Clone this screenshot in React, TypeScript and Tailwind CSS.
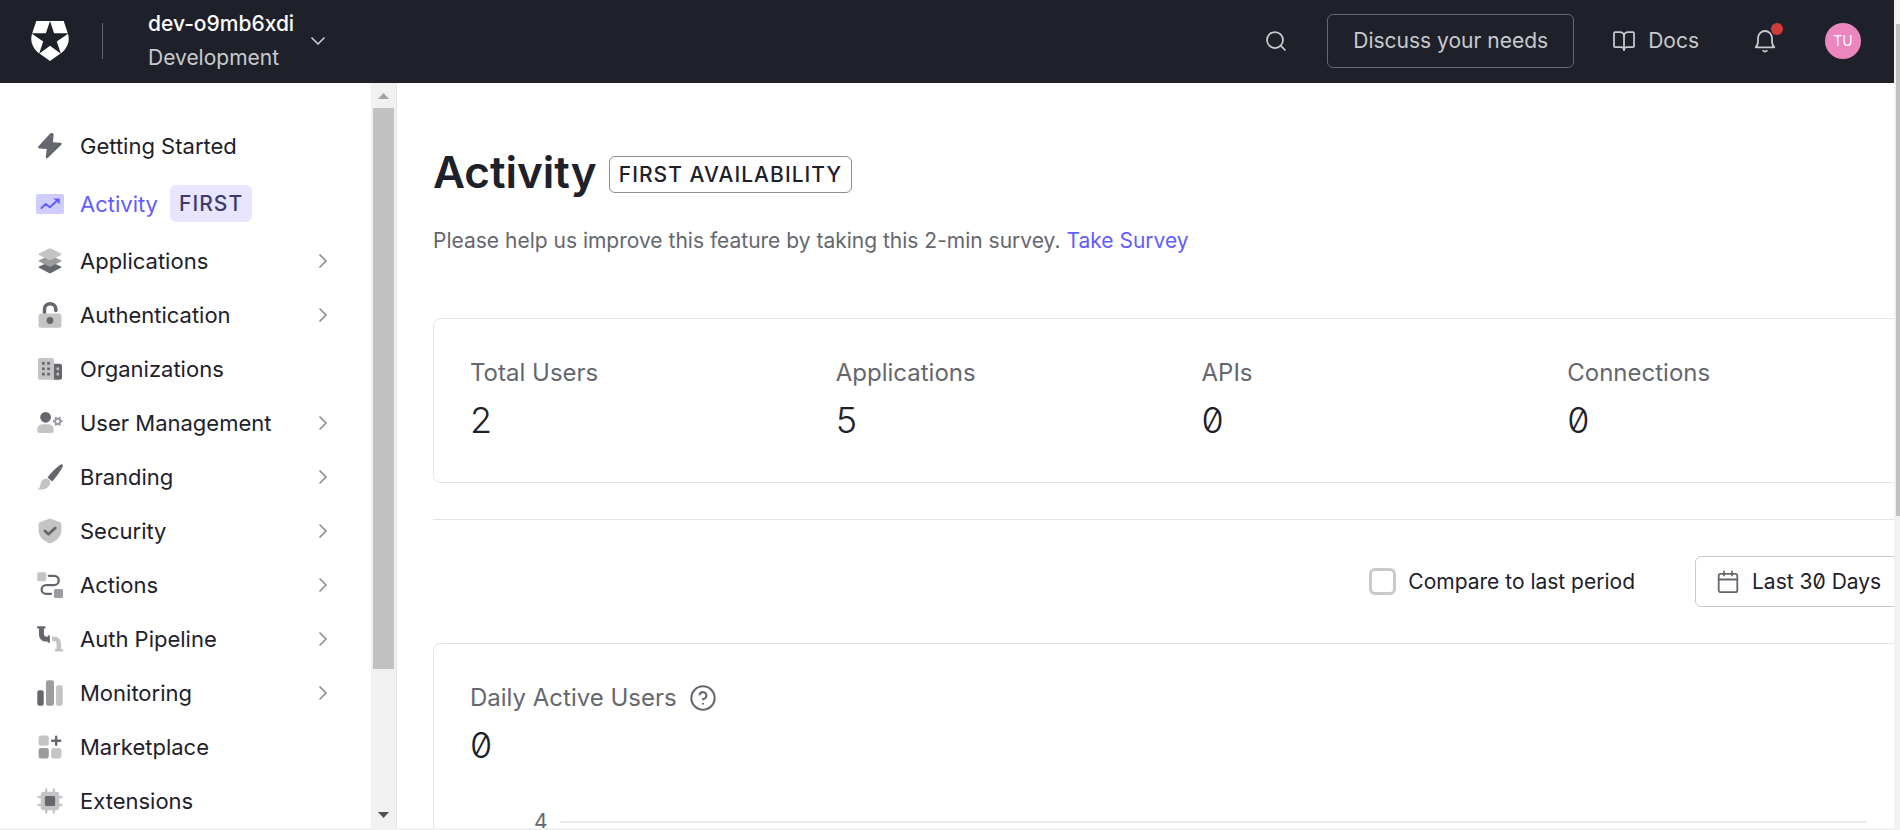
import type { ReactNode } from "react";
import { BookOpen, ChevronDown, ChevronRight, CircleHelp, Search } from "lucide-react";

const DARK = "#65676e";
const MID = "#9b9c9f";
const LIGHT = "#c4c4c5";

function NavIcon({ children }: { children: ReactNode }) {
  return (
    <svg viewBox="0 0 28 28" className="size-7 shrink-0" fill="none" aria-hidden="true">
      {children}
    </svg>
  );
}

const icons: Record<string, ReactNode> = {
  start: (
    <path
      d="M13.300 2.400 2.500 14.300c-.9 1-.5 2 .8 2.100l7.400.5-.9 8c-.1 1.400 1.300 1.800 2.200.8L25.300 12.800c.9-1 .5-2-.8-2.100l-7.500-.4.6-7.600c.1-1.500-2.300-2.500-4.300-.3Z"
      fill={DARK}
    />
  ),
  activity: (
    <>
      <rect x="0" y="4" width="28" height="20" rx="2" fill="#cfcdff" />
      <path d="m5.500 18 4.300-4 4 3.300 7.200-6.500" stroke="#635dff" strokeWidth="2" strokeLinecap="round" strokeLinejoin="round" />
      <path d="M17.500 8.500h6.200v6z" fill="#635dff" />
    </>
  ),
  applications: (
    <>
      <path d="M14 14.500 25 19.400c.6.300.6 1.100 0 1.400l-10 5.200c-.6.300-1.400.300-2 0L3 20.800c-.6-.3-.6-1.100 0-1.400Z" fill={DARK} />
      <path d="M14 8 25 13.200c.6.300.6 1.100 0 1.400l-10 5c-.6.300-1.400.300-2 0l-10-5c-.6-.3-.6-1.100 0-1.400Z" fill={MID} />
      <path d="M13 1.600c.6-.3 1.400-.3 2 0l10 4.900c.6.300.6 1.100 0 1.400l-10 5.200c-.6.300-1.400.300-2 0L3 7.900c-.6-.3-.6-1.100 0-1.400Z" fill={LIGHT} />
    </>
  ),
  authentication: (
    <>
      <rect x="2.600" y="12.500" width="22.800" height="14.300" rx="2.500" fill={LIGHT} />
      <path d="M8.500 12.500V8.300c0-7.400 11.300-7.400 11.300 0v1.200" stroke={DARK} strokeWidth="3.500" />
      <circle cx="19.800" cy="9.500" r="1.750" fill={DARK} />
      <circle cx="14" cy="19.500" r="3.400" fill={DARK} />
    </>
  ),
  organizations: (
    <>
      <path d="M4 3h12a2 2 0 0 1 2 2v19.700H4a2 2 0 0 1-2-2V5a2 2 0 0 1 2-2Z" fill={LIGHT} />
      <path d="M18 8.700h6a2 2 0 0 1 2 2v12a2 2 0 0 1-2 2h-6Z" fill={DARK} />
      <path d="M6 7h2.700v2.700H6zM11.200 7h2.700v2.700h-2.700zM6 12.400h2.700v2.700H6zM11.200 12.400h2.700v2.700h-2.700zM6 17.800h2.700v2.700H6zM11.200 17.800h2.700v2.700h-2.700z" fill={DARK} />
      <path d="M20.600 12.400h2.400v2.700h-2.400zM20.600 17.800h2.400v2.700h-2.400z" fill={LIGHT} />
    </>
  ),
  users: (
    <>
      <circle cx="9.600" cy="8.300" r="5.400" fill={DARK} />
      <path d="M6.500 15.300h6c3 0 5.200 2.300 5.200 5.200v1.500a2 2 0 0 1-2 2H3.300a2 2 0 0 1-2-2v-1.500c0-2.900 2.200-5.200 5.200-5.200Z" fill={LIGHT} />
      <circle cx="21.700" cy="12.300" r="2.600" stroke={MID} strokeWidth="2" />
      <path d="M20.200 9.700 19.400 8M23.200 9.700l.8-1.700M20.200 14.900l-.8 1.700M23.200 14.900l.8 1.700M18.700 12.300h-2M24.700 12.300h2" stroke={MID} strokeWidth="2" />
    </>
  ),
  branding: (
    <>
      <path d="M26.400 1.500c.8.8.3 2.400-.2 3.300-2.500 4.600-6.200 9.800-10 13.600l-4.600-4C15.200 9.800 19.700 5.200 24 2.100c.9-.6 1.800-1.100 2.400-.6Z" fill={DARK} />
      <path d="M10 15.500c2.800.3 4.800 2.400 4.300 4.800-1.300 5.500-7.700 7.300-13 6 2-.6 2.600-2 3-4.300.6-3.600 2.400-6.200 5.700-6.500Z" fill={LIGHT} />
    </>
  ),
  security: (
    <>
      <path d="M13.200 1.800c.5-.2 1.100-.2 1.600 0l9.300 3.400c.8.3 1.300.9 1.300 1.700v6.600c0 5.800-4.800 10.400-10.600 12.700-.5.200-1.100.2-1.600 0C7.400 23.900 2.600 19.300 2.600 13.500V6.900c0-.8.5-1.400 1.300-1.700Z" fill={LIGHT} />
      <path d="m9 14 3.400 3.300 6.800-6.300" stroke={DARK} strokeWidth="2.800" strokeLinecap="round" strokeLinejoin="round" />
    </>
  ),
  actions: (
    <>
      <rect x="1.200" y="1.200" width="9" height="9" rx="1.500" fill={LIGHT} />
      <rect x="18" y="18" width="9" height="9" rx="1.500" fill={MID} />
      <path d="M12.800 4.800h5.300a4.600 4.600 0 0 1 0 9.300H10a4.300 4.300 0 0 0 0 8.700h5" stroke={DARK} strokeWidth="2.300" strokeLinecap="round" />
    </>
  ),
  pipeline: (
    <>
      <path d="M2 1.300h6.500a1 1 0 0 1 0 2.200H8v5.300c0 1.900 1 2.900 2.700 2.900h1v-.5c0-1.200 2.200-1.200 2.200 0V17c0 1.200-2.200 1.200-2.200 0v-.6H10c-4.200 0-7-2.700-7-7V3.500H2a1 1 0 0 1 0-2.200Z" fill={DARK} />
      <path d="M16 11.400h1.500c4.800 0 7.600 2.900 7.600 7.700v5h.9a1.200 1.200 0 0 1 0 2.500h-6a1.200 1.200 0 0 1 0-2.500h.5v-5c0-2-.9-3-3-3H16Z" fill={LIGHT} />
    </>
  ),
  monitoring: (
    <>
      <rect x="1.300" y="11.300" width="6.400" height="15.400" rx="2" fill={DARK} />
      <rect x="10" y="1.200" width="8" height="25.500" rx="2.200" fill={MID} />
      <rect x="20" y="6.200" width="6.700" height="20.500" rx="2" fill={LIGHT} />
    </>
  ),
  marketplace: (
    <>
      <rect x="2.600" y="2.500" width="10.200" height="10.200" rx="2.500" fill={LIGHT} />
      <rect x="2.600" y="15" width="10.200" height="10.500" rx="2.500" fill={MID} />
      <rect x="15.200" y="15" width="10.200" height="10.500" rx="2.500" fill={LIGHT} />
      <path d="M20.200 3.700v8M16.200 7.700h8" stroke={DARK} strokeWidth="2.400" strokeLinecap="round" />
    </>
  ),
  extensions: (
    <>
      <path d="M10.200 2.500v23M17.800 2.500v23M2.500 10.200h23M2.500 17.800h23" stroke={LIGHT} strokeWidth="2.300" strokeLinecap="round" />
      <rect x="4.700" y="4.700" width="18.600" height="18.600" rx="3" fill={LIGHT} />
      <rect x="8.900" y="8.900" width="10.200" height="10.200" rx="1.500" fill={DARK} />
    </>
  ),
};

const nav = [
  { icon: "start", label: "Getting Started" },
  { icon: "activity", label: "Activity", active: true },
  { icon: "applications", label: "Applications", nested: true },
  { icon: "authentication", label: "Authentication", nested: true },
  { icon: "organizations", label: "Organizations" },
  { icon: "users", label: "User Management", nested: true },
  { icon: "branding", label: "Branding", nested: true },
  { icon: "security", label: "Security", nested: true },
  { icon: "actions", label: "Actions", nested: true },
  { icon: "pipeline", label: "Auth Pipeline", nested: true },
  { icon: "monitoring", label: "Monitoring", nested: true },
  { icon: "marketplace", label: "Marketplace" },
  { icon: "extensions", label: "Extensions" },
];

const stats = [
  { label: "Total Users", value: 2 },
  { label: "Applications", value: 5 },
  { label: "APIs", value: 0 },
  { label: "Connections", value: 0 },
];

function Logo() {
  return (
    <svg viewBox="0 0 38 40" className="h-10 w-[38px]" aria-hidden="true">
      <path
        fill="#fff"
        d="M5.300 0H19l-4.100 12.300H1.200ZM19 0h13.700l4.100 12.300H23.100ZM1 12.700 12.200 20.400 8.200 32.400C2 27.500-1.300 20.500 1 12.700ZM37 12.700 25.800 20.400l4 12C36 27.500 39.300 20.500 37 12.700ZM19 24.800 29.500 32.400 19 40 8.500 32.400Z"
      />
    </svg>
  );
}

function Header() {
  return (
    <header className="flex h-[83px] shrink-0 items-center bg-[#1e212a] pr-[33px] pb-0.5 pl-[31px] text-[#c9cace]">
      <a href="#home" aria-label="Home">
        <Logo />
      </a>
      <span className="ml-[33px] h-9 w-px bg-[#65676e]" />
      <button type="button" className="ml-[45px] flex items-center gap-3 text-left text-[21px]">
        <span className="flex flex-col leading-[34px]">
          <span className="font-medium text-white">dev-o9mb6xdi</span>
          <span>Development</span>
        </span>
        <ChevronDown className="size-6" strokeWidth={1.75} />
      </button>
      <div className="ml-auto flex items-center">
        <button type="button" aria-label="Search">
          <Search className="size-6" strokeWidth={1.75} />
        </button>
        <button type="button" className="ml-[39px] h-[54px] rounded-md border border-[#65676e] px-[25px] text-[21px]">
          Discuss your needs
        </button>
        <a href="#docs" className="ml-[38px] flex items-center gap-3 text-[21px]">
          <BookOpen className="size-6" strokeWidth={1.75} />
          Docs
        </a>
        <button type="button" aria-label="Notifications" className="relative ml-[54px]">
          <svg viewBox="0 0 24 24" className="size-6" fill="none" stroke="currentColor" strokeWidth="1.800" strokeLinecap="round" strokeLinejoin="round">
            <path d="M2.700 18.300h18.600c-1.700-1.300-2.300-3.300-2.300-6V9A7 7 0 0 0 5 9v3.300c0 2.700-.6 4.700-2.300 6Z" />
            <path d="M10.200 21.700c.9 1.100 2.700 1.100 3.600 0" />
          </svg>
          <span className="absolute -top-1.5 -right-1.5 size-3 rounded-full bg-[#d03c38]" />
        </button>
        <button type="button" className="ml-12 size-9 rounded-full bg-[#eb86bf] text-sm text-white">
          TU
        </button>
      </div>
    </header>
  );
}

function Sidebar() {
  return (
    <aside className="flex w-[397px] shrink-0 border-r border-[#e3e4e6]">
      <nav className="flex-1 overflow-hidden px-9 pt-9 text-[22px] leading-[30px] text-[#1e212a]">
        {nav.map((item) => (
          <a key={item.label} href={`#${item.icon}`} className={item.active ? "flex items-center py-3 text-[#635dff]" : "flex items-center py-3"}>
            <NavIcon>{icons[item.icon]}</NavIcon>
            <span className="ml-4">{item.label}</span>
            {item.active && (
              <span className="ml-3 h-[37px] rounded-md bg-[#e8e6ff] px-[9px] text-[21px] leading-[37px] font-medium tracking-wider text-[#3f3a6e]">FIRST</span>
            )}
            {item.nested && <ChevronRight className="ml-auto size-6 text-[#8b8d93]" strokeWidth={1.75} />}
          </a>
        ))}
      </nav>
      <div className="flex w-[25px] flex-col items-center justify-between bg-[#f1f1f1]" aria-hidden="true">
        <div className="flex min-h-0 w-full flex-1 flex-col items-center">
          <svg viewBox="0 0 11 6" className="mt-2.5 mb-[9px] h-[6px] w-[11px] shrink-0">
            <path d="M5.500 0 11 6H0Z" fill="#a3a3a3" />
          </svg>
          <div className="h-[77%] w-[21px] bg-[#c1c1c1]" />
        </div>
        <svg viewBox="0 0 11 6" className="mb-2.5 h-[6px] w-[11px] shrink-0">
          <path d="M0 0h11L5.500 6Z" fill="#505050" />
        </svg>
      </div>
    </aside>
  );
}

function Content() {
  return (
    <main className="min-w-0 flex-1 overflow-hidden pt-[60px] pl-9 text-[#1e212a]">
      <div className="-mr-12 flex flex-col">
        <div className="flex items-end gap-3">
          <h1 className="text-[44px] leading-[58px] font-semibold">Activity</h1>
          <span className="mb-2 h-[37px] rounded-md border border-[#8b8d93] px-[9px] text-[21px] leading-[35px] font-medium tracking-wider">
            FIRST AVAILABILITY
          </span>
        </div>
        <p className="mt-[25px] text-[21px] leading-[30px] text-[#65676e]">
          Please help us improve this feature by taking this 2-min survey.{" "}
          <a href="#survey" className="text-[#635dff]">
            Take Survey
          </a>
        </p>

        <section className="mt-[62px] grid grid-cols-4 gap-7 rounded-lg border border-[#e3e4e6] px-9 py-9">
          {stats.map((s) => (
            <div key={s.label}>
              <h2 className="text-2xl leading-9 text-[#65676e]">{s.label}</h2>
              <p className="mt-1 text-4xl leading-[51px] font-light slashed-zero">{s.value}</p>
            </div>
          ))}
        </section>

        <hr className="mt-9 border-[#e3e4e6]" />

        <div className="mt-9 flex items-center justify-end text-[21px]">
          <label className="flex items-center gap-3">
            <input type="checkbox" className="size-[27px] appearance-none rounded-md border-3 border-[#c9cace]" />
            Compare to last period
          </label>
          <button type="button" className="ml-[60px] flex h-[51px] w-[247px] items-center gap-3 rounded-md border border-[#c9cace] pl-5 whitespace-nowrap slashed-zero">
            <svg viewBox="0 0 24 24" className="size-6 shrink-0 text-[#65676e]" fill="none" stroke="currentColor" strokeWidth="1.800" strokeLinecap="round" strokeLinejoin="round">
              <rect x="2.700" y="3.800" width="18.600" height="18.400" rx="2" />
              <path d="M2.700 9.500h18.600M8 1.500v4M16 1.500v4" />
            </svg>
            Last 30 Days
            <ChevronDown className="size-5 shrink-0" />
          </button>
        </div>

        <section className="mt-9 rounded-lg border border-[#e3e4e6] px-9 py-9">
          <h2 className="flex items-center gap-3 text-2xl leading-9 text-[#65676e]">
            Daily Active Users
            <CircleHelp className="size-7" strokeWidth={1.75} />
          </h2>
          <p className="mt-1 text-4xl leading-[51px] font-light slashed-zero">0</p>
          <div className="mt-9 mr-[38px] flex items-center gap-3 pl-16 text-[21px] leading-[30px] text-[#65676e]">
            <span>4</span>
            <span className="h-0.5 flex-1 bg-[#ebebeb]" />
          </div>
          <div className="h-80" />
        </section>
      </div>
    </main>
  );
}

export default function App() {
  return (
    <div className="flex h-screen overflow-hidden bg-white font-['Inter',sans-serif]">
      <div className="flex min-w-0 flex-1 flex-col">
        <Header />
        <div className="flex min-h-0 flex-1">
          <Sidebar />
          <Content />
        </div>
        <div className="h-0.5 shrink-0 bg-[#f1f1f1]" />
      </div>
      <div className="w-1.5 shrink-0 bg-[#f1f1f1] pt-6 pl-0.5" aria-hidden="true">
        <div className="h-[61%] bg-[#c1c1c1]" />
      </div>
    </div>
  );
}
